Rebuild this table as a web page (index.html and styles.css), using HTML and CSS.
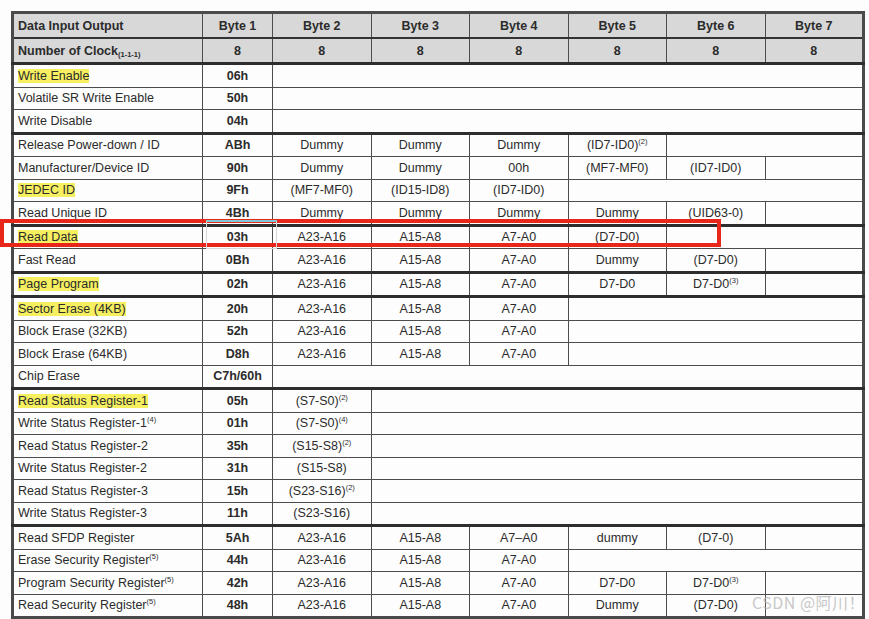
FILE: index.html
```html
<!DOCTYPE html>
<html>
<head>
<meta charset="utf-8">
<link rel="stylesheet" href="styles.css">
</head>
<body>
<div class="sheet">
  <table class="cmd">
    <colgroup>
      <col class="c-name"><col class="c-b1"><col class="c-b"><col class="c-b"><col class="c-b"><col class="c-b"><col class="c-b"><col class="c-b">
    </colgroup>
    <tr class="hdr">
      <td class="name">Data Input Output</td><td>Byte 1</td><td>Byte 2</td><td>Byte 3</td><td>Byte 4</td><td>Byte 5</td><td>Byte 6</td><td>Byte 7</td>
    </tr>
    <tr class="hdr">
      <td class="name">Number of Clock<sub>(1-1-1)</sub></td><td>8</td><td>8</td><td>8</td><td>8</td><td>8</td><td>8</td><td>8</td>
    </tr>
    <tr class="sep"><td class="name"><span class="hl">Write Enable</span></td><td class="op">06h</td><td colspan="6"></td></tr>
    <tr><td class="name">Volatile SR Write Enable</td><td class="op">50h</td><td colspan="6"></td></tr>
    <tr><td class="name">Write Disable</td><td class="op">04h</td><td colspan="6"></td></tr>
    <tr class="sep"><td class="name">Release Power-down / ID</td><td class="op">ABh</td><td>Dummy</td><td>Dummy</td><td>Dummy</td><td>(ID7-ID0)<sup>(2)</sup></td><td colspan="2"></td></tr>
    <tr><td class="name">Manufacturer/Device ID</td><td class="op">90h</td><td>Dummy</td><td>Dummy</td><td>00h</td><td>(MF7-MF0)</td><td>(ID7-ID0)</td><td></td></tr>
    <tr><td class="name"><span class="hl">JEDEC ID</span></td><td class="op">9Fh</td><td>(MF7-MF0)</td><td>(ID15-ID8)</td><td>(ID7-ID0)</td><td colspan="3"></td></tr>
    <tr><td class="name">Read Unique ID</td><td class="op">4Bh</td><td>Dummy</td><td>Dummy</td><td>Dummy</td><td>Dummy</td><td>(UID63-0)</td><td></td></tr>
    <tr class="sep"><td class="name"><span class="hl">Read Data</span></td><td class="op"><span class="uline">03h</span></td><td>A23-A16</td><td>A15-A8</td><td>A7-A0</td><td>(D7-D0)</td><td colspan="2"></td></tr>
    <tr><td class="name">Fast Read</td><td class="op">0Bh</td><td>A23-A16</td><td>A15-A8</td><td>A7-A0</td><td>Dummy</td><td>(D7-D0)</td><td></td></tr>
    <tr class="sep"><td class="name"><span class="hl">Page Program</span></td><td class="op">02h</td><td>A23-A16</td><td>A15-A8</td><td>A7-A0</td><td>D7-D0</td><td>D7-D0<sup>(3)</sup></td><td></td></tr>
    <tr class="sep"><td class="name"><span class="hl">Sector Erase (4KB)</span></td><td class="op">20h</td><td>A23-A16</td><td>A15-A8</td><td>A7-A0</td><td colspan="3"></td></tr>
    <tr><td class="name">Block Erase (32KB)</td><td class="op">52h</td><td>A23-A16</td><td>A15-A8</td><td>A7-A0</td><td colspan="3"></td></tr>
    <tr><td class="name">Block Erase (64KB)</td><td class="op">D8h</td><td>A23-A16</td><td>A15-A8</td><td>A7-A0</td><td colspan="3"></td></tr>
    <tr><td class="name">Chip Erase</td><td class="op">C7h/60h</td><td colspan="6"></td></tr>
    <tr class="sep"><td class="name"><span class="hl">Read Status Register-1</span></td><td class="op">05h</td><td>(S7-S0)<sup>(2)</sup></td><td colspan="5"></td></tr>
    <tr><td class="name">Write Status Register-1<sup>(4)</sup></td><td class="op">01h</td><td>(S7-S0)<sup>(4)</sup></td><td colspan="5"></td></tr>
    <tr><td class="name">Read Status Register-2</td><td class="op">35h</td><td>(S15-S8)<sup>(2)</sup></td><td colspan="5"></td></tr>
    <tr><td class="name">Write Status Register-2</td><td class="op">31h</td><td>(S15-S8)</td><td colspan="5"></td></tr>
    <tr><td class="name">Read Status Register-3</td><td class="op">15h</td><td>(S23-S16)<sup>(2)</sup></td><td colspan="5"></td></tr>
    <tr><td class="name">Write Status Register-3</td><td class="op">11h</td><td>(S23-S16)</td><td colspan="5"></td></tr>
    <tr class="sep"><td class="name">Read SFDP Register</td><td class="op">5Ah</td><td>A23-A16</td><td>A15-A8</td><td>A7&ndash;A0</td><td>dummy</td><td>(D7-0)</td><td></td></tr>
    <tr><td class="name">Erase Security Register<sup>(5)</sup></td><td class="op">44h</td><td>A23-A16</td><td>A15-A8</td><td>A7-A0</td><td colspan="3"></td></tr>
    <tr><td class="name">Program Security Register<sup>(5)</sup></td><td class="op">42h</td><td>A23-A16</td><td>A15-A8</td><td>A7-A0</td><td>D7-D0</td><td>D7-D0<sup>(3)</sup></td><td></td></tr>
    <tr><td class="name">Read Security Register<sup>(5)</sup></td><td class="op">48h</td><td>A23-A16</td><td>A15-A8</td><td>A7-A0</td><td>Dummy</td><td>(D7-D0)</td><td></td></tr>
  </table>
  <div class="redbox"></div>
  <div class="selbox"></div>
  <div class="watermark">CSDN @阿川！</div>
</div>
</body>
</html>
```
FILE: styles.css
```css
html, body {
  margin: 0;
  padding: 0;
}
body {
  background: #ebebeb;
  font-family: "Liberation Sans", Arial, sans-serif;
}
.sheet {
  position: relative;
  width: 869px;
  background: #fdfdfd;
  padding: 11px 0 0 11px;
  box-sizing: border-box;
}
.cmd {
  border-collapse: collapse;
  table-layout: fixed;
  width: 852px;
  border: 3px solid #4a4a4a;
  color: #2b2b2b;
  font-size: 12.5px;
}
.c-name { width: 190px; }
.c-b1 { width: 70px; }
.c-b { width: 98.5px; }
.cmd td {
  border: 1px solid #4d4d4d;
  height: 21.5px;
  padding: 0 2px;
  text-align: center;
  white-space: nowrap;
  line-height: 14px;
}
.cmd td.name {
  text-align: left;
  padding-left: 4px;
}
.cmd td.op {
  font-weight: bold;
}
.cmd tr.hdr td {
  background: #d8d8d8;
  font-weight: bold;
  height: 23px;
  border-bottom: 2px solid #333;
}
.cmd tr.sep td {
  border-top: 3px solid #2e2e2e;
}
.hl {
  background: #f6f061;
}
sup, sub {
  font-size: 7.5px;
  line-height: 0;
}
sup { vertical-align: 5px; }
sub { vertical-align: -2px; }
.uline {
  border-bottom: 1px solid #e0281c;
}
.redbox {
  position: absolute;
  left: 0;
  top: 219px;
  width: 721px;
  height: 28px;
  box-sizing: border-box;
  border: 4px solid #e8261a;
}
.selbox {
  position: absolute;
  left: 206px;
  top: 220px;
  width: 71px;
  height: 29px;
  box-sizing: border-box;
  border: 1px solid #d8d8d8;
  border-top: 2px solid #7fc8d6;
}
.watermark {
  position: absolute;
  left: 752px;
  top: 592px;
  font-family: "Noto Sans CJK SC", "Noto Sans", sans-serif;
  font-size: 16px;
  line-height: 20px;
  color: rgba(185, 185, 185, 0.8);
  letter-spacing: 0.5px;
}
```
